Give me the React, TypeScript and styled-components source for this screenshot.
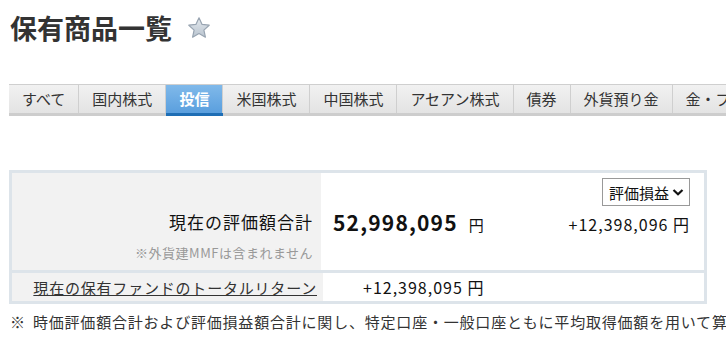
import styled, { createGlobalStyle } from "styled-components";

const GlobalStyle = createGlobalStyle`
  html, body {
    margin: 0;
    padding: 0;
    background: #fff;
    overflow: hidden;
  }
  body {
    font-family: "Noto Sans CJK JP", "Noto Sans", sans-serif;
    color: #333;
  }
`;

const tabs = ["すべて", "国内株式", "投信", "米国株式", "中国株式", "アセアン株式", "債券", "外貨預り金", "金・プラチナ"];

function Star() {
  return (
    <svg width="24" height="24" viewBox="0 0 24 24">
      <defs>
        <linearGradient id="starFill" x1="0" y1="0" x2="0" y2="1">
          <stop offset="0" stopColor="#e4e9ee" />
          <stop offset="1" stopColor="#b9c4cf" />
        </linearGradient>
      </defs>
      <path
        d="M12 1.8l3.1 6.6 7.1.8-5.3 4.9 1.5 7.1L12 17.6l-6.4 3.6 1.5-7.1L1.8 9.2l7.1-.8z"
        fill="url(#starFill)"
        stroke="#98a4b1"
        strokeWidth="1.2"
        strokeLinejoin="round"
      />
    </svg>
  );
}

function Chevron() {
  return (
    <svg width="12" height="10" viewBox="0 0 12 10">
      <path d="M1.5 3l4.5 4.2L10.5 3" fill="none" stroke="#111" strokeWidth="2.2" />
    </svg>
  );
}

export default function App() {
  return (
    <Page>
      <GlobalStyle />
      <TitleRow>
        <Title>保有商品一覧</Title>
        <Star />
      </TitleRow>

      <TabBar>
        {tabs.map((t) => (
          <Tab key={t} $active={t === "投信"}>{t}</Tab>
        ))}
      </TabBar>

      <Summary>
        <SummaryRow>
          <LabelCell>
            <Label>現在の評価額合計</Label>
            <Note>※外貨建MMFは含まれません</Note>
          </LabelCell>
          <ValueCell>
            <SelectBox>
              評価損益 <Chevron />
            </SelectBox>
            <Amounts>
              <Total>
                52,998,095<Yen>円</Yen>
              </Total>
              <Gain>+12,398,096 円</Gain>
            </Amounts>
          </ValueCell>
        </SummaryRow>
        <SummaryRow>
          <LinkCell>
            <ReturnLink href="#">現在の保有ファンドのトータルリターン</ReturnLink>
          </LinkCell>
          <ReturnValue>+12,398,095 円</ReturnValue>
        </SummaryRow>
      </Summary>

      <Footnote>
        ※ 時価評価額合計および評価損益額合計に関し、特定口座・一般口座ともに平均取得価額を用いて算出しています。なお、NISA口座の保有分については取得価額を用いて算出しています。
      </Footnote>
    </Page>
  );
}

const Page = styled.div`
  width: 726px;
  overflow: hidden;
  padding-top: 10px;
`;

const TitleRow = styled.div`
  display: flex;
  align-items: center;
  gap: 15px;
  padding-left: 10px;
  height: 36px;
`;

const Title = styled.h1`
  margin: 0;
  font-size: 27px;
  font-weight: 700;
  color: #333;
  line-height: 36px;
`;

const TabBar = styled.div`
  display: flex;
  margin: 38px 0 0 9px;
  width: 900px;
  border-top: 1px solid #cfcfcf;
  border-bottom: 3px solid #cdcdcd;
  background: linear-gradient(#f1f1f1, #e3e3e3);
`;

const Tab = styled.div<{ $active?: boolean }>`
  flex: none;
  height: 28px;
  line-height: 28px;
  padding: 0 13px;
  font-size: 15px;
  white-space: nowrap;
  border-right: 1px solid #cfcfcf;
  color: ${(p) => (p.$active ? "#fff" : "#333")};
  font-weight: ${(p) => (p.$active ? 700 : 400)};
  background: ${(p) => (p.$active ? "linear-gradient(#80b9ea, #5a9fde)" : "transparent")};
  box-shadow: ${(p) => (p.$active ? "0 3px 0 #1e6eb5" : "none")};
`;

const Summary = styled.div`
  margin: 54px 0 0 9px;
  width: 692px;
  border: 3px solid #dde4ea;
  background: #dde4ea;
  display: flex;
  flex-direction: column;
  gap: 3px;
`;

const SummaryRow = styled.div`
  display: flex;
  background: #fff;
`;

const LabelCell = styled.div`
  width: 309px;
  height: 97px;
  background: #f2f2f2;
  display: flex;
  flex-direction: column;
  align-items: flex-end;
  justify-content: flex-end;
  padding: 0 8px 7px 0;
  box-sizing: border-box;
`;

const Label = styled.div`
  font-size: 17px;
  letter-spacing: 1px;
  color: #111;
  line-height: 22px;
`;

const Note = styled.div`
  font-size: 13px;
  letter-spacing: 0.5px;
  color: #999;
  line-height: 20px;
  margin-top: 10px;
`;

const ValueCell = styled.div`
  flex: 1;
  display: flex;
  flex-direction: column;
  align-items: stretch;
  padding: 5px 14px 0 12px;
`;

const SelectBox = styled.div`
  align-self: flex-end;
  display: flex;
  align-items: center;
  gap: 3px;
  height: 26px;
  padding: 0 5px 0 6px;
  border: 1px solid #999;
  font-size: 15px;
  color: #111;
`;

const Amounts = styled.div`
  display: flex;
  justify-content: space-between;
  align-items: baseline;
  margin-top: 1px;
`;

const Total = styled.div`
  font-size: 21px;
  font-weight: 700;
  color: #111;
  letter-spacing: 1.2px;
`;

const Yen = styled.span`
  font-size: 15px;
  font-weight: 400;
  margin-left: 11px;
`;

const Gain = styled.div`
  font-size: 16px;
  letter-spacing: 1px;
  color: #111;
`;

const LinkCell = styled.div`
  width: 311px;
  height: 28px;
  background: #f2f2f2;
  display: flex;
  align-items: center;
  justify-content: flex-end;
  padding-right: 6px;
  box-sizing: border-box;
`;

const ReturnLink = styled.a`
  font-size: 15px;
  letter-spacing: 0.8px;
  color: #333;
  text-decoration: underline;
`;

const ReturnValue = styled.div`
  display: flex;
  align-items: center;
  padding-left: 40px;
  font-size: 16px;
  letter-spacing: 1px;
  color: #111;
`;

const Footnote = styled.p`
  margin: 6px 0 0 10px;
  width: 1100px;
  font-size: 15px;
  letter-spacing: 0.8px;
  word-spacing: 3px;
  line-height: 23px;
  color: #333;
`;
